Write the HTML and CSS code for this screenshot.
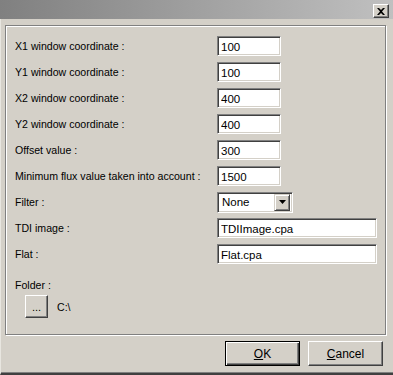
FILE: index.html
```html
<!DOCTYPE html>
<html lang="en">
<head>
  <meta charset="UTF-8">
  <title>Settings</title>
  <link rel="stylesheet" href="styles.css">
</head>
<body>
  <div class="window">
    <div class="titlebar">
      <button class="close" type="button" aria-label="Close">
        <svg width="8" height="7" viewBox="0 0 8 7"><path d="M0 0h2l2 2 2-2h2L5 3.5 8 7H6L4 5 2 7H0l3-3.5z" fill="#000"/></svg>
      </button>
    </div>
    <div class="dialog">
      <div class="group">
        <div class="fields">
          <label>X1 window coordinate :</label><input class="edit short" value="100">
          <label>Y1 window coordinate :</label><input class="edit short" value="100">
          <label>X2 window coordinate :</label><input class="edit short" value="400">
          <label>Y2 window coordinate :</label><input class="edit short" value="400">
          <label>Offset value :</label><input class="edit short" value="300">
          <label>Minimum flux value taken into account :</label><input class="edit short" value="1500">
          <label>Filter :</label>
          <div class="combo"><span class="combo-text">None</span><span class="combo-btn"><svg width="7" height="4" viewBox="0 0 7 4"><path d="M0 0h7L3.5 4z" fill="#000"/></svg></span></div>
          <label>TDI image :</label><input class="edit long" value="TDIImage.cpa">
          <label>Flat :</label><input class="edit long" value="Flat.cpa">
        </div>
        <div class="folder">
          <div class="folder-label">Folder :</div>
          <div class="folder-row">
            <button class="btn browse" type="button">...</button>
            <span class="path">C:\</span>
          </div>
        </div>
      </div>
      <div class="actions">
        <button class="btn push default" type="button"><u>O</u>K</button>
        <button class="btn push" type="button"><u>C</u>ancel</button>
      </div>
    </div>
  </div>
</body>
</html>
```

FILE: styles.css
```css
* { box-sizing: border-box; }
html, body { margin: 0; padding: 0; }

body {
  width: 393px;
  height: 375px;
  overflow: hidden;
  background: #d4d0c8;
  font-family: 'Liberation Sans', Arial, sans-serif;
  font-size: 10.6px;
  color: #000;
}

.window {
  height: 375px;
  display: flex;
  flex-direction: column;
  border-left: 1px solid #e8e6e0;
  border-bottom: 2px solid #404040;
  box-shadow: inset 0 -1px 0 #808080;
}

/* Title bar (inactive) */
.titlebar {
  height: 19px;
  flex: 0 0 19px;
  margin-left: -1px;
  background: linear-gradient(to right, #808080, #c0c0c0);
  display: flex;
  justify-content: flex-end;
  align-items: flex-start;
  padding: 4px 4px 0 0;
}

.close {
  width: 16px;
  height: 14px;
  padding: 0;
  background: #d4d0c8;
  border: 1px solid;
  border-color: #fff #404040 #404040 #fff;
  box-shadow: inset -1px -1px 0 #808080;
  display: flex;
  align-items: center;
  justify-content: center;
}

/* Dialog body */
.dialog {
  flex: 1;
  padding: 6px 0 0 4px;
}

.group {
  width: 381px;
  height: 310px;
  border: 1px solid #808080;
  box-shadow: inset 1px 1px 0 #fff, 1px 1px 0 #fff;
  padding: 10px 0 0 9px;
}

.fields {
  display: grid;
  grid-template-columns: 202px auto;
  grid-auto-rows: 20px;
  row-gap: 6px;
  justify-items: start;
  align-items: center;
}

.fields label { white-space: nowrap; }

.edit {
  height: 20px;
  margin: 0;
  padding: 1px 3px 0;
  font-family: inherit;
  font-size: 11.5px;
  color: #000;
  background: #fff;
  border: 1px solid;
  border-color: #808080 #fff #fff #808080;
  box-shadow: inset 1px 1px 0 #404040, inset -1px -1px 0 #d4d0c8;
  outline: none;
}

.short { width: 64px; }
.long { width: 160px; }

.combo {
  width: 76px;
  height: 21px;
  display: flex;
  align-items: center;
  background: #fff;
  border: 1px solid;
  border-color: #808080 #fff #fff #808080;
  box-shadow: inset 1px 1px 0 #404040, inset -1px -1px 0 #d4d0c8;
  padding: 2px;
  font-size: 11.5px;
}

.combo-text { flex: 1; padding-left: 2px; }

.combo-btn {
  width: 16px;
  height: 17px;
  background: #d4d0c8;
  border: 1px solid;
  border-color: #d4d0c8 #404040 #404040 #d4d0c8;
  box-shadow: inset 1px 1px 0 #fff, inset -1px -1px 0 #808080;
  display: flex;
  align-items: center;
  justify-content: center;
}

.folder { margin-top: 15px; }

.folder-label { line-height: 13px; }

.folder-row {
  display: flex;
  align-items: center;
  gap: 9px;
  margin: 3px 0 0 10px;
}

/* Buttons */
.btn {
  margin: 0;
  padding: 0;
  font-family: inherit;
  font-size: 11px;
  color: #000;
  background: #d4d0c8;
  border: 1px solid;
  border-color: #fff #404040 #404040 #fff;
  box-shadow: inset -1px -1px 0 #808080;
}

.browse {
  width: 23px;
  height: 23px;
  line-height: 12px;
}

.actions {
  display: flex;
  justify-content: flex-end;
  gap: 8px;
  margin: 6px 10px 0 0;
}

.push {
  width: 75px;
  height: 25px;
  font-size: 12px;
}

.push.default {
  border-color: #000;
  box-shadow: inset 1px 1px 0 #fff, inset -1px -1px 0 #404040, inset -2px -2px 0 #808080;
}
```
